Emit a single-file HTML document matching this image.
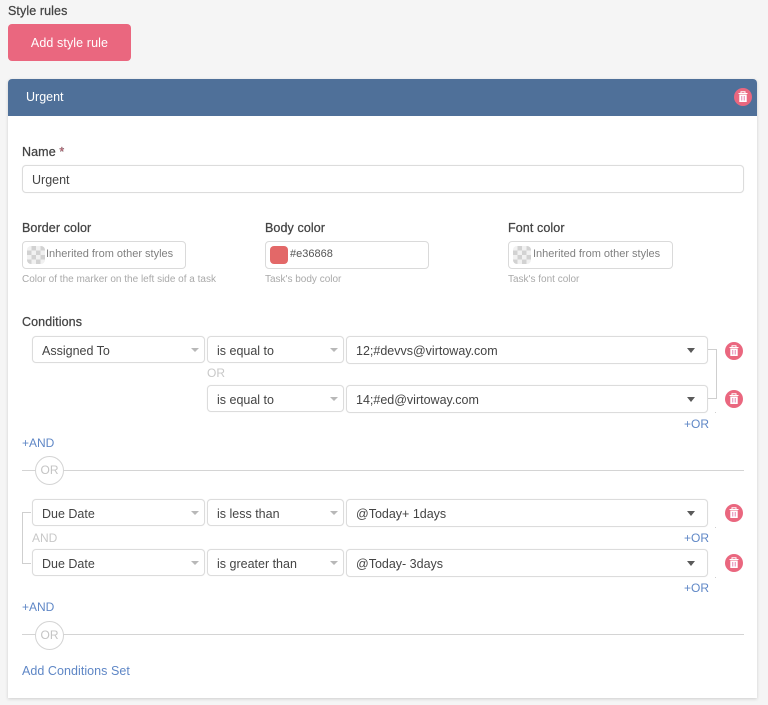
<!DOCTYPE html>
<html><head><meta charset="utf-8"><style>
html,body{margin:0;padding:0}
body{width:768px;height:705px;background:#f5f5f5;position:relative;overflow:hidden;font-family:"Liberation Sans",Arial,sans-serif;font-size:12.5px;color:#444;filter:blur(.3px)}
div,svg.a{position:absolute;box-sizing:border-box}
.t{white-space:nowrap;line-height:16px;height:16px}
.l{font-size:12.5px;color:#444;letter-spacing:.1px;-webkit-text-stroke:.25px #444}
.h{font-size:10px;color:#a9a9a9}
.f{background:#fff;border:1px solid #dcdcdc;border-radius:4px;white-space:nowrap;color:#444;line-height:29px;padding-left:9px;box-shadow:0 0 1px #e8e8e8}
.f::after{content:"";position:absolute;right:5px;top:11px;border:4px solid transparent;border-top:4px solid #b8b8b8;border-bottom:0}
.f.d::after{right:12px;top:11px;border:4.5px solid transparent;border-top:5px solid #5a5a5a;border-bottom:0}
.f.n::after{display:none}
.b{color:#5f87c6;font-size:12px}
.g{color:#c8c8c8;font-size:12px}
.o{width:29px;height:29px;border:1px solid #d4d4d4;border-radius:50%;background:#fff;color:#c4c4c4;text-align:center;line-height:27px;font-size:12px}
.r{background:#cfcfcf}
.sw{left:4px;top:4px;width:18px;height:18px;border-radius:4px}
.ch{background:repeating-conic-gradient(#d2d2d2 0 25%,#f1f1f1 0 50%) 0 0/9px 9px}
.c{background:#fff;border:1px solid #dadada;border-radius:4px;color:#808080;line-height:25px;padding-left:23px;white-space:nowrap;font-size:11px}
</style></head><body>
<div class="t l" style="left:8px;top:3px">Style rules</div>
<div style="left:8px;top:24px;width:123px;height:37px;background:#ea677f;border-radius:4px;color:#fff;text-align:center;line-height:39px;font-size:12.5px;letter-spacing:.1px">Add style rule</div>
<div style="left:8px;top:79px;width:749px;height:619px;background:#fff;border-radius:4px 4px 0 0;box-shadow:0 1px 3px rgba(0,0,0,.16)"></div>
<div style="left:8px;top:79px;width:749px;height:37px;background:#4f7099;border-radius:4px 4px 0 0"></div>
<div class="t" style="left:26px;top:89px;color:#fff">Urgent</div>
<svg class="a" style="left:734px;top:88px" width="18" height="18" viewBox="0 0 18 18"><circle cx="9" cy="9" r="9" fill="#ea677f"/><path d="M4.500 5.500h9M7 5.500V3.800h4v1.700" stroke="#fff" fill="none"/><path d="M5.300 6.500h7.400v7.500H5.300z" fill="#fff"/><path d="M7.700 8v4.500M10.300 8v4.500" stroke="#eaa0c4" stroke-width="1.300"/></svg>

<div class="t l" style="left:22px;top:144px">Name <span style="color:#ea677f">*</span></div>
<div class="f n" style="left:22px;top:165px;width:722px;height:28px;padding-left:9px">Urgent</div>

<div class="t l" style="left:22px;top:220px">Border color</div>
<div class="c" style="left:22px;top:241px;width:164px;height:28px">Inherited from other styles<div class="sw ch"></div></div>
<div class="t h" style="left:22px;top:272px">Color of the marker on the left side of a task</div>
<div class="t l" style="left:265px;top:220px">Body color</div>
<div class="c" style="left:265px;top:241px;width:164px;height:28px;color:#555;padding-left:24px">#e36868<div class="sw" style="background:#e36868"></div></div>
<div class="t h" style="left:265px;top:272px">Task's body color</div>
<div class="t l" style="left:508px;top:220px">Font color</div>
<div class="c" style="left:508px;top:241px;width:165px;height:28px;padding-left:24px">Inherited from other styles<div class="sw ch"></div></div>
<div class="t h" style="left:508px;top:272px">Task's font color</div>

<div class="t l" style="left:22px;top:314px">Conditions</div>

<div class="f" style="left:32px;top:336px;width:173px;height:27px">Assigned To</div>
<div class="f" style="left:207px;top:336px;width:137px;height:27px">is equal to</div>
<div class="f d" style="left:346px;top:336px;width:362px;height:28px">12;#devvs@virtoway.com</div>
<div class="t g" style="left:207px;top:365px">OR</div>
<div class="f" style="left:207px;top:385px;width:137px;height:27px">is equal to</div>
<div class="f d" style="left:346px;top:385px;width:362px;height:28px">14;#ed@virtoway.com</div>
<div class="t b" style="left:684px;top:416px">+OR</div>
<div class="r" style="left:708px;top:349px;width:8px;height:1px"></div>
<div class="r" style="left:716px;top:349px;width:1px;height:50px"></div>
<div class="r" style="left:708px;top:398px;width:8px;height:1px"></div>
<div class="r" style="left:715px;top:412px;width:1px;height:1px"></div>
<div class="t b" style="left:22px;top:435px">+AND</div>
<div class="r" style="left:22px;top:470px;width:722px;height:1px;background:#d4d4d4"></div>
<div class="o" style="left:35px;top:456px">OR</div>

<div class="f" style="left:32px;top:499px;width:173px;height:27px">Due Date</div>
<div class="f" style="left:207px;top:499px;width:137px;height:27px">is less than</div>
<div class="f d" style="left:346px;top:499px;width:362px;height:28px">@Today+ 1days</div>
<div class="t g" style="left:32px;top:530px">AND</div>
<div class="t b" style="left:684px;top:530px">+OR</div>
<div class="f" style="left:32px;top:549px;width:173px;height:27px">Due Date</div>
<div class="f" style="left:207px;top:549px;width:137px;height:27px">is greater than</div>
<div class="f d" style="left:346px;top:549px;width:362px;height:28px">@Today- 3days</div>
<div class="t b" style="left:684px;top:580px">+OR</div>
<div class="r" style="left:22px;top:512px;width:9px;height:1px"></div>
<div class="r" style="left:22px;top:512px;width:1px;height:52px"></div>
<div class="r" style="left:22px;top:563px;width:9px;height:1px"></div>
<div class="r" style="left:715px;top:527px;width:1px;height:1px"></div>
<div class="r" style="left:715px;top:577px;width:1px;height:1px"></div>
<div class="t b" style="left:22px;top:599px">+AND</div>
<div class="r" style="left:22px;top:634px;width:722px;height:1px;background:#d4d4d4"></div>
<div class="o" style="left:35px;top:621px">OR</div>
<div class="t b" style="left:22px;top:663px;font-size:12.5px;letter-spacing:.05px">Add Conditions Set</div>

<svg class="a" style="left:725px;top:342px" width="18" height="18" viewBox="0 0 18 18"><circle cx="9" cy="9" r="9" fill="#ea677f"/><path d="M4.500 5.500h9M7 5.500V3.800h4v1.700" stroke="#fff" fill="none"/><path d="M5.300 6.500h7.400v7.500H5.300z" fill="#fff"/><path d="M7.700 8v4.500M10.300 8v4.500" stroke="#eaa0c4" stroke-width="1.300"/></svg>
<svg class="a" style="left:725px;top:390px" width="18" height="18" viewBox="0 0 18 18"><circle cx="9" cy="9" r="9" fill="#ea677f"/><path d="M4.500 5.500h9M7 5.500V3.800h4v1.700" stroke="#fff" fill="none"/><path d="M5.300 6.500h7.400v7.500H5.300z" fill="#fff"/><path d="M7.700 8v4.500M10.300 8v4.500" stroke="#eaa0c4" stroke-width="1.300"/></svg>
<svg class="a" style="left:725px;top:504px" width="18" height="18" viewBox="0 0 18 18"><circle cx="9" cy="9" r="9" fill="#ea677f"/><path d="M4.500 5.500h9M7 5.500V3.800h4v1.700" stroke="#fff" fill="none"/><path d="M5.300 6.500h7.400v7.500H5.300z" fill="#fff"/><path d="M7.700 8v4.500M10.300 8v4.500" stroke="#eaa0c4" stroke-width="1.300"/></svg>
<svg class="a" style="left:725px;top:554px" width="18" height="18" viewBox="0 0 18 18"><circle cx="9" cy="9" r="9" fill="#ea677f"/><path d="M4.500 5.500h9M7 5.500V3.800h4v1.700" stroke="#fff" fill="none"/><path d="M5.300 6.500h7.400v7.500H5.300z" fill="#fff"/><path d="M7.700 8v4.500M10.300 8v4.500" stroke="#eaa0c4" stroke-width="1.300"/></svg>
</body></html>
